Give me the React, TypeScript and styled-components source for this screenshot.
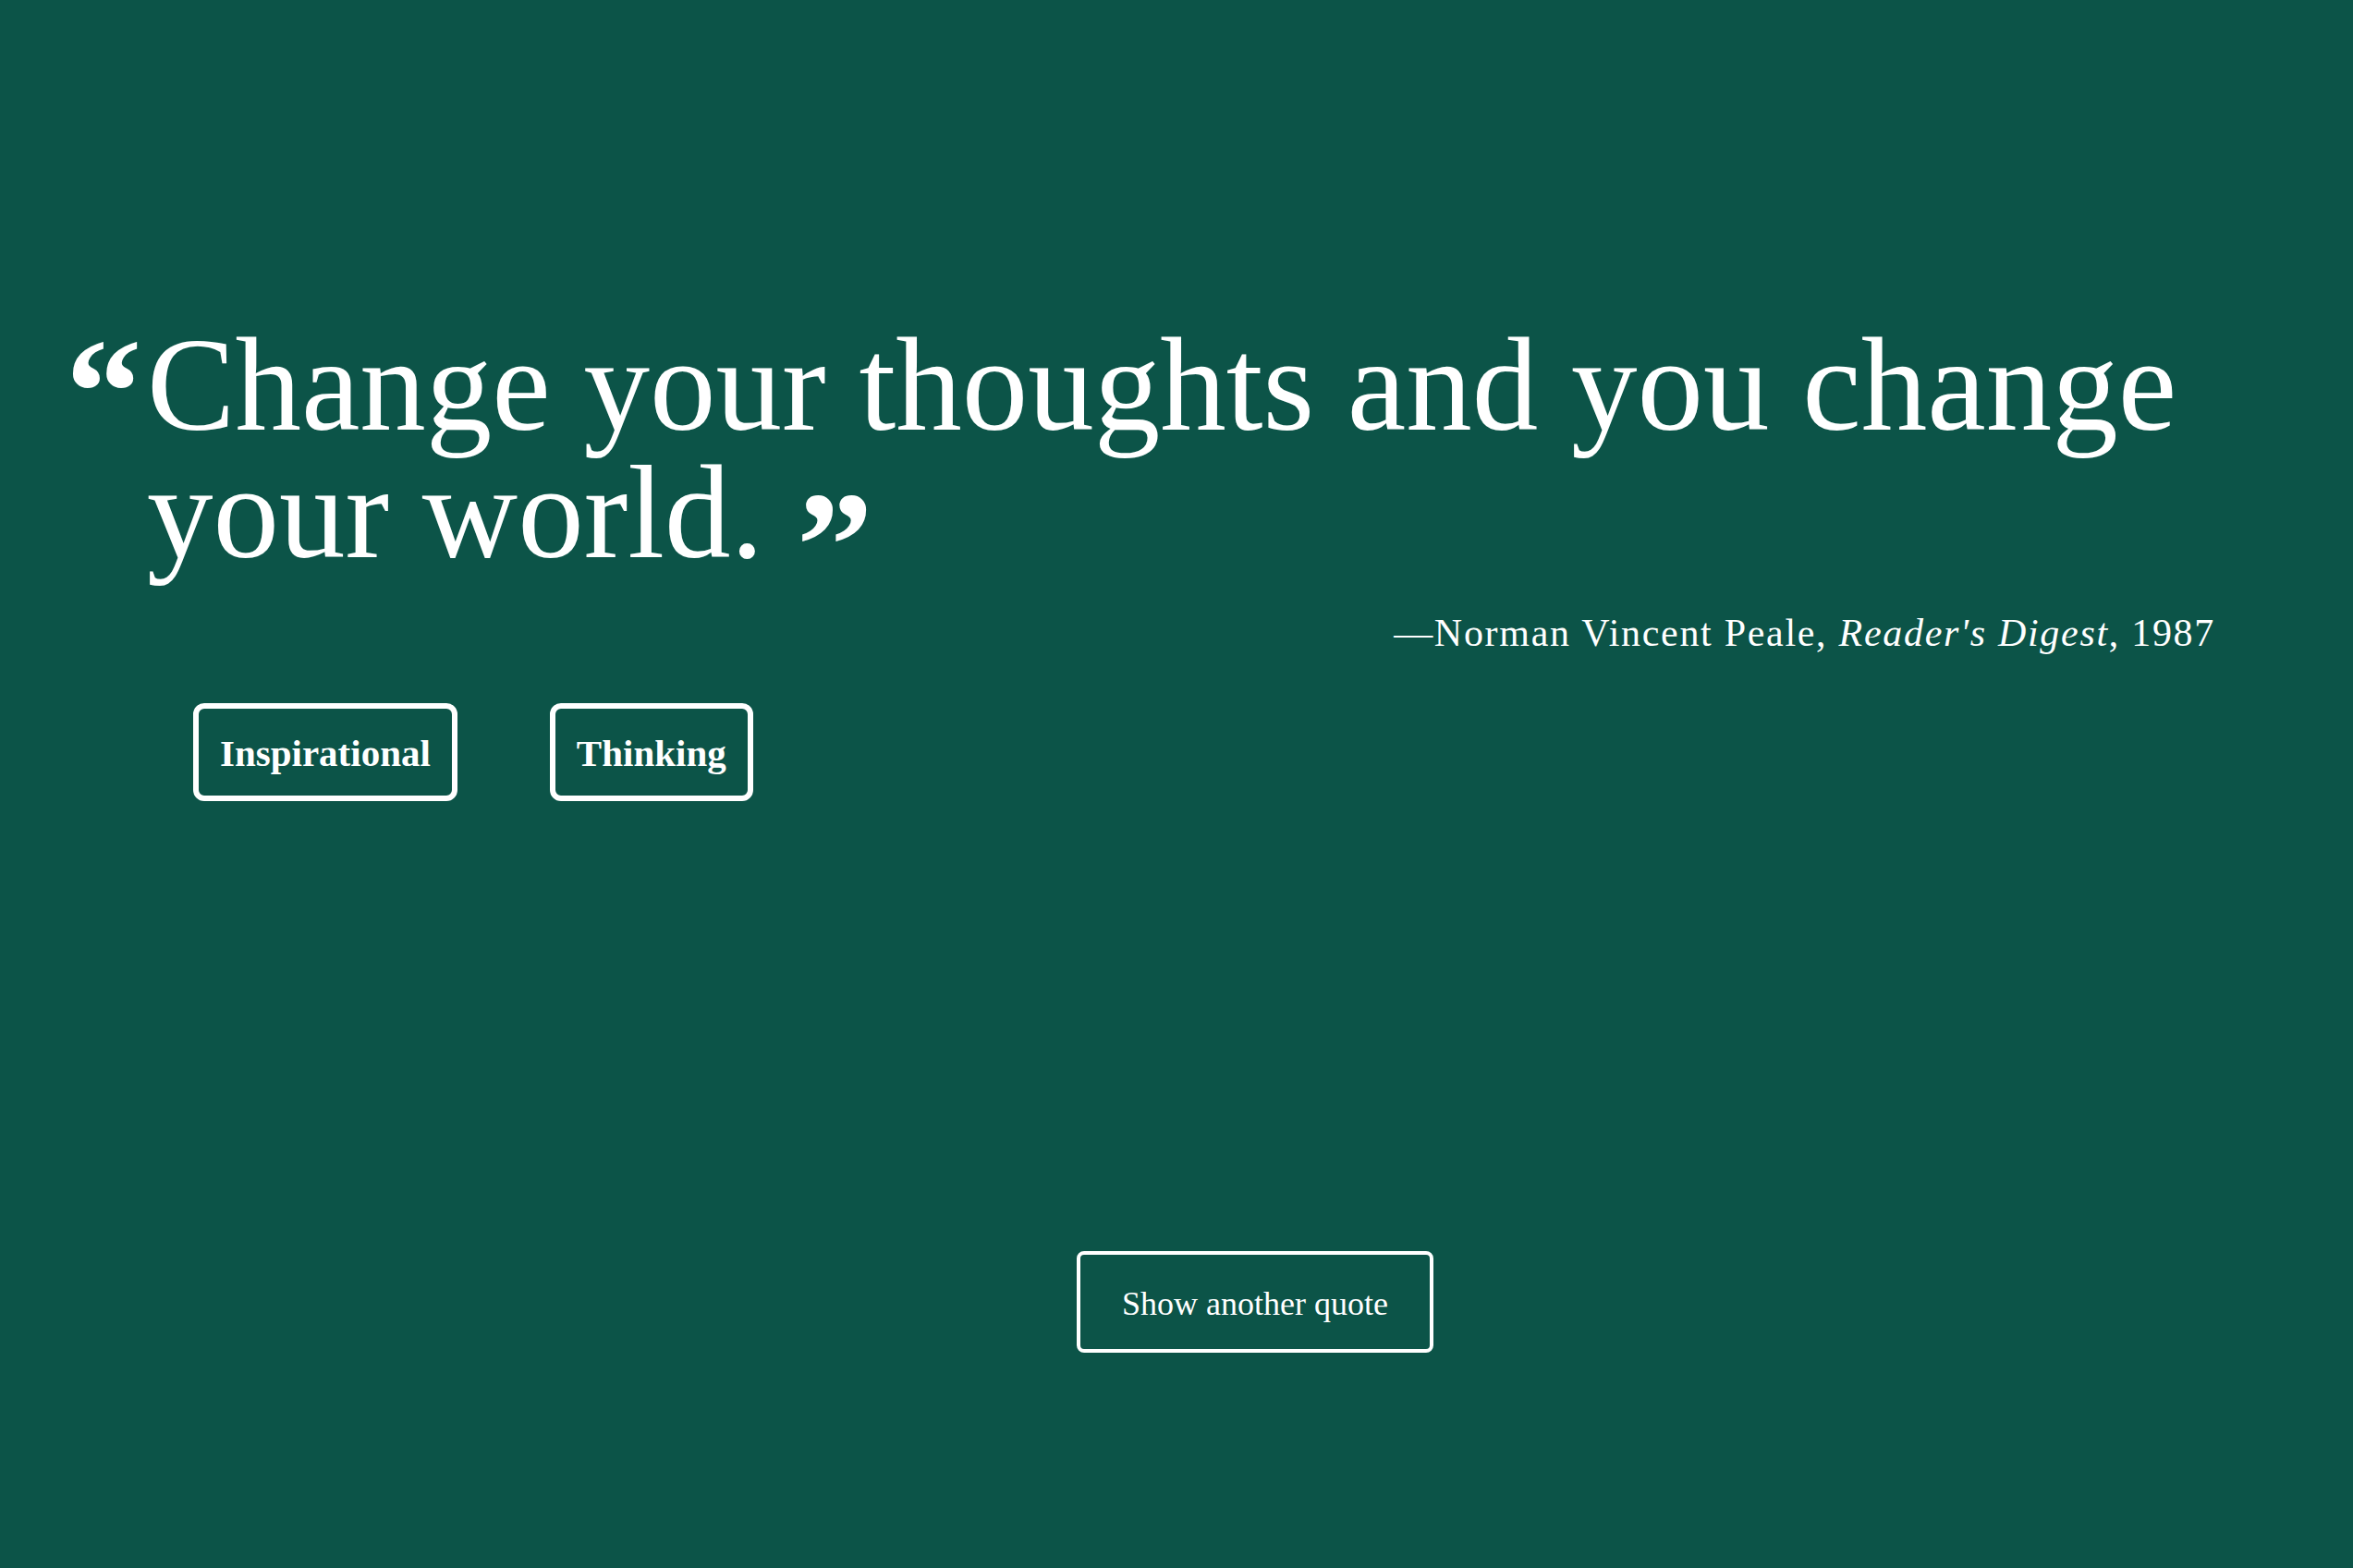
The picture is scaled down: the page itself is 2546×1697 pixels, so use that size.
import React from "react";
import styled, { createGlobalStyle } from "styled-components";

const GlobalStyle = createGlobalStyle`
  html, body {
    margin: 0;
    padding: 0;
    background: #0c5448;
  }
  body {
    font-family: "Liberation Serif", "Times New Roman", serif;
    color: #ffffff;
  }
`;

const Page = styled.main`
  min-height: 100vh;
  box-sizing: border-box;
  padding: 348px 149px 0 71px;
  display: flex;
  flex-direction: column;
`;

const Figure = styled.figure`
  margin: 0;
  display: flex;
  flex-direction: column;
`;

const QuoteRow = styled.blockquote`
  margin: 0;
  display: flex;
  align-items: flex-start;
`;

const OpenMark = styled.span`
  flex: 0 0 88px;
  font-family: "Liberation Serif", serif;
  font-weight: 700;
  font-size: 165px;
  line-height: 153px;
`;

const QuoteText = styled.p`
  margin: 0;
  flex: 1;
  font-family: "Liberation Serif", serif;
  font-size: 143px;
  line-height: 138px;
  font-weight: 400;
`;

const CloseMark = styled.span`
  font-weight: 700;
  font-size: 165px;
  vertical-align: -43px;
  line-height: 0;
`;

const Attribution = styled.figcaption`
  margin-top: 36px;
  text-align: right;
  font-size: 42px;
  line-height: 50px;
  letter-spacing: 1.7px;
`;

const TagList = styled.ul`
  list-style: none;
  margin: 51px 0 0 138px;
  padding: 0;
  display: flex;
  gap: 100px;
`;

const Tag = styled.li`
  border: 6px solid #ffffff;
  border-radius: 12px;
  padding: 25px 23px 22px;
  font-size: 41px;
  line-height: 47px;
  font-weight: 700;
`;

const ButtonRow = styled.div`
  margin-top: 487px;
  padding-left: 248px;
  display: flex;
  justify-content: center;
`;

const NextButton = styled.button`
  background: transparent;
  color: #ffffff;
  border: 4px solid #ffffff;
  border-radius: 8px;
  padding: 33px 45px 29px;
  font-family: "Liberation Serif", serif;
  font-size: 36px;
  line-height: 40px;
  cursor: pointer;
`;

export default function App() {
  return (
    <>
      <GlobalStyle />
      <Page>
        <Figure>
          <QuoteRow>
            <OpenMark>“</OpenMark>
            <QuoteText>
              Change your thoughts and you change your world. <CloseMark>”</CloseMark>
            </QuoteText>
          </QuoteRow>
          <Attribution>
            —Norman Vincent Peale, <i>Reader's Digest</i>, 1987
          </Attribution>
        </Figure>
        <TagList>
          <Tag>Inspirational</Tag>
          <Tag>Thinking</Tag>
        </TagList>
        <ButtonRow>
          <NextButton>Show another quote</NextButton>
        </ButtonRow>
      </Page>
    </>
  );
}
